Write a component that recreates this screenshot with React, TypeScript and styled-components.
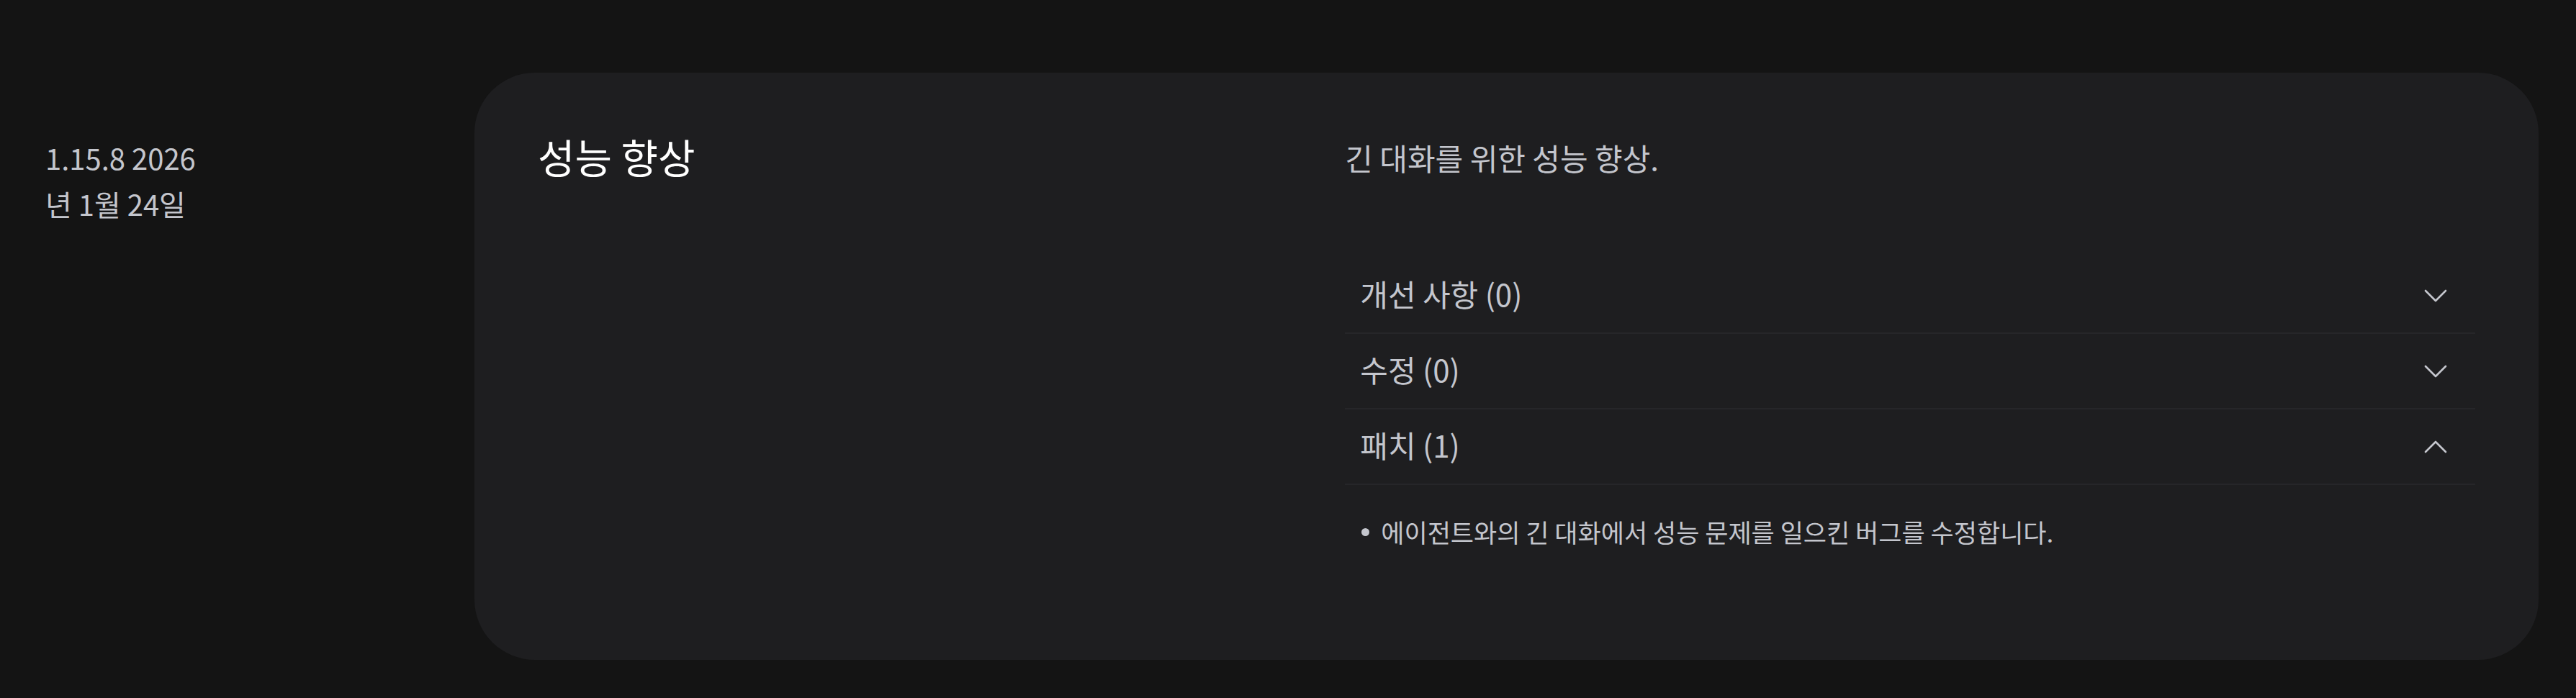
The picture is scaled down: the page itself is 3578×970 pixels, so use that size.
import React from "react";
import styled, { createGlobalStyle } from "styled-components";

const GlobalStyle = createGlobalStyle`
  html, body {
    margin: 0;
    padding: 0;
    background: #141414;
  }
  body {
    font-family: "Noto Sans CJK KR", "Noto Sans", sans-serif;
    color: #c4c6cd;
  }
  * { box-sizing: border-box; }
`;

const Page = styled.div`
  display: flex;
  align-items: stretch;
  width: 3578px;
  height: 970px;
  padding: 101px 52px 53px 63px;
  background: #141414;
`;

const DateCol = styled.div`
  flex: 0 0 596px;
  padding-top: 86px;
  font-size: 40px;
  line-height: 64px;
  color: #c4c6cd;
`;

const DateLine = styled.div`
  white-space: nowrap;
`;

const Card = styled.section`
  flex: 1;
  display: grid;
  grid-template-columns: 5fr 7fr;
  align-items: start;
  padding: 80px 88px;
  background: #1e1e20;
  border-radius: 84px;
`;

const Title = styled.h2`
  margin: 0;
  font-size: 56px;
  line-height: 1.3;
  font-weight: 400;
  color: #ffffff;
`;

const RightCol = styled.div`
  display: flex;
  flex-direction: column;
`;

const Description = styled.p`
  margin: 6px 0 0 0;
  font-size: 42px;
  line-height: 63px;
  color: #c4c6cd;
`;

const Accordion = styled.div`
  margin-top: 109px;
  display: flex;
  flex-direction: column;
`;

const Row = styled.div`
  border-bottom: 2px solid #262629;
`;

const RowHeader = styled.div`
  display: flex;
  align-items: center;
  justify-content: space-between;
  height: 103px;
  padding: 0 39px 0 21px;
  font-size: 42px;
  color: #c4c6cd;
`;

const RowLabel = styled.span`
  margin-bottom: 6px;
`;

const Chevron = styled.svg<{ $open?: boolean }>`
  width: 32px;
  height: 20px;
  transform: ${(p) => (p.$open ? "rotate(180deg)" : "none")};
`;

const Panel = styled.ul`
  margin: 0;
  padding: 37px 0 0 23px;
  list-style: none;
`;

const Item = styled.li`
  display: flex;
  align-items: center;
  gap: 16px;
  font-size: 35px;
  line-height: 56px;
  color: #c4c6cd;
`;

const Dot = styled.span`
  flex: 0 0 11px;
  width: 11px;
  height: 11px;
  border-radius: 50%;
  background: #c4c6cd;
`;

const ChevronIcon = ({ open }: { open?: boolean }) => (
  <Chevron $open={open} viewBox="0 0 32 20" fill="none">
    <path
      d="M2 3 L16 17 L30 3"
      stroke="#c4c6cd"
      strokeWidth="2.6"
      strokeLinecap="round"
      strokeLinejoin="round"
    />
  </Chevron>
);

const sections = [
  { label: "개선 사항 (0)", open: false, items: [] as string[] },
  { label: "수정 (0)", open: false, items: [] as string[] },
  {
    label: "패치 (1)",
    open: true,
    items: ["에이전트와의 긴 대화에서 성능 문제를 일으킨 버그를 수정합니다."],
  },
];

export default function App() {
  return (
    <>
      <GlobalStyle />
      <Page>
        <DateCol>
          <DateLine>1.15.8 2026</DateLine>
          <DateLine>년 1월 24일</DateLine>
        </DateCol>
        <Card>
          <Title>성능 향상</Title>
          <RightCol>
            <Description>긴 대화를 위한 성능 향상.</Description>
            <Accordion>
              {sections.map((s) => (
                <React.Fragment key={s.label}>
                  <Row>
                    <RowHeader>
                      <RowLabel>{s.label}</RowLabel>
                      <ChevronIcon open={s.open} />
                    </RowHeader>
                  </Row>
                  {s.open && (
                    <Panel>
                      {s.items.map((it) => (
                        <Item key={it}>
                          <Dot />
                          <span>{it}</span>
                        </Item>
                      ))}
                    </Panel>
                  )}
                </React.Fragment>
              ))}
            </Accordion>
          </RightCol>
        </Card>
      </Page>
    </>
  );
}
